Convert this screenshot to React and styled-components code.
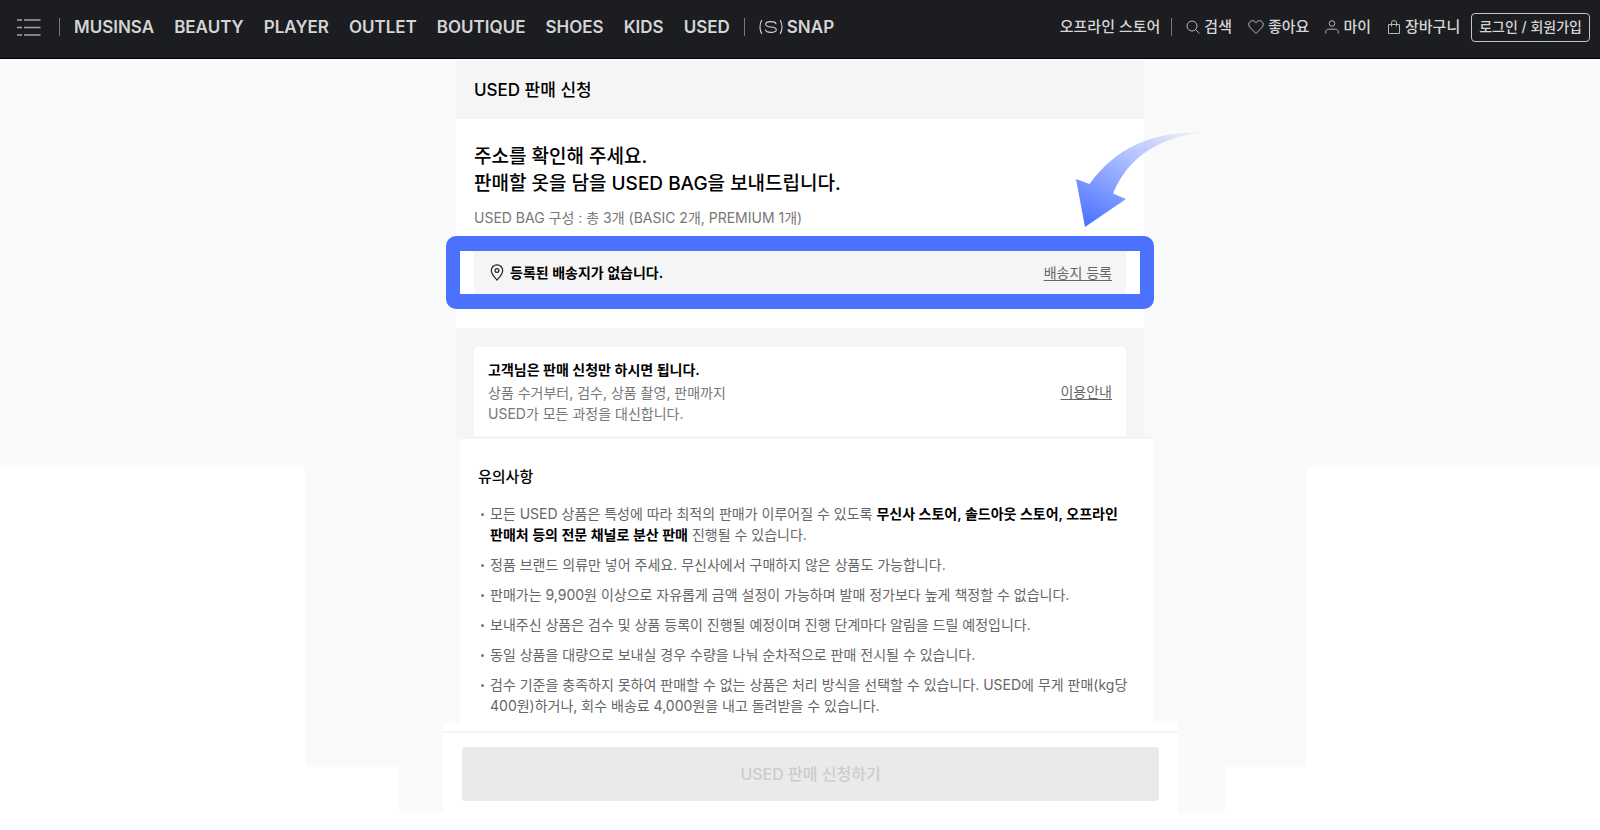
import React from "react";
import styled, { createGlobalStyle } from "styled-components";

const GlobalStyle = createGlobalStyle`
  *, *::before, *::after { box-sizing: border-box; }
  body {
    margin: 0;
    background: #fff;
    color: #000;
    font-family: Inter, "Noto Sans CJK KR", sans-serif;
    font-size: 14px;
    line-height: 21px;
    word-break: keep-all;
  }
  h1, h2, p, ul { margin: 0; padding: 0; }
  a { color: inherit; }
`;

const Header = styled.header`
  display: flex;
  align-items: center;
  justify-content: space-between;
  gap: 24px;
  height: 59px;
  padding: 0 10px 4px 17px;
  background: #1c1d20;
  border-bottom: 1px solid #000;
  color: #d4d4d6;
  font-weight: 500;
  white-space: nowrap;
`;

const NavGroup = styled.nav`
  display: flex;
  align-items: center;
  gap: ${(p) => p.$gap}px;
`;

const LinkList = styled.div`
  display: flex;
  align-items: center;
  gap: ${(p) => p.$gap}px;
  padding-left: ${(p) => p.$indent || 0}px;
`;

const MenuButton = styled.button`
  display: flex;
  padding: 0 4px 0 0;
  border: 0;
  background: none;
  color: #a4a5a7;
`;

const Divider = styled.span`
  width: 1px;
  height: 18px;
  background: #77787b;
`;

const NavLink = styled.a`
  display: flex;
  align-items: center;
  gap: 4px;
  font-size: ${(p) => (p.$small ? 15 : 17)}px;
  font-weight: ${(p) => (p.$small ? 500 : 600)};
  line-height: 24px;
  text-decoration: none;

  svg { color: #b4b5b7; }
`;

const LoginButton = styled.button`
  height: 29px;
  padding: 0 7px;
  border: 1px solid #c4c5c7;
  border-radius: 4px;
  background: none;
  color: inherit;
  font: inherit;
  line-height: 24px;
`;

const Main = styled.main`
  display: flex;
  flex-direction: column;
  align-items: center;
  min-height: 754px;
  border-top: 2px solid #fcfcfc;
  background:
    linear-gradient(#fafafa, #fafafa) center top / 100% 406px no-repeat,
    linear-gradient(#fafafa, #fafafa) calc(50% + 6px) top / 1002px 706px no-repeat,
    linear-gradient(#fafafa, #fafafa) calc(50% + 12px) top / 826px 752px no-repeat;
`;

const Column = styled.div`
  width: 100%;
  max-width: 688px;
`;

const TitleBar = styled.div`
  padding: 17px 18px;
  background: #f5f5f5;
  font-size: 17px;
  font-weight: 500;
  line-height: 24px;

  h1 { font: inherit; }
`;

const Intro = styled.section`
  position: relative;
  padding: 24px 18px 34px;
  background: #fff;
`;

const Headline = styled.h2`
  font-size: 19px;
  font-weight: 500;
  line-height: 27px;
`;

const SubText = styled.p`
  margin-top: 10px;
  color: #777;
`;

const AddressRow = styled.div`
  position: relative;
  display: flex;
  align-items: center;
  gap: 6px;
  height: 43px;
  margin-top: 23px;
  padding: 0 14px 0 16px;
  background: #f5f5f5;
`;

const Highlight = styled.div`
  position: absolute;
  inset: -15px -28px;
  border: solid #4a72ff;
  border-width: 15px 14px;
  border-radius: 10px;
  pointer-events: none;
`;

const Arrow = styled.svg`
  position: absolute;
  top: 13px;
  right: -58px;
`;

const Strong = styled.strong`
  color: #000;
  font-weight: 600;
`;

const TextLink = styled.a`
  margin-left: auto;
  color: #666;
  text-underline-offset: 2px;
`;

const Info = styled.section`
  padding: 19px 18px 0;
  background: #f5f5f5;
`;

const Card = styled.div`
  display: flex;
  align-items: center;
  height: 89px;
  padding: 0 14px;
  border-radius: 4px 4px 0 0;
  background: #fff;

  p {
    margin-top: 2px;
    color: #777;
  }
`;

const Notice = styled.section`
  width: 100%;
  max-width: 706px;
  padding-left: 13px;
`;

const NoticeBody = styled.div`
  padding: 27px 16px 7px 18px;
  border-top: 3px solid #f5f5f5;
  background: #fff;

  h2 {
    font-size: 15px;
    font-weight: 500;
    line-height: 21px;
  }
`;

const NoticeList = styled.ul`
  display: flex;
  flex-direction: column;
  gap: 9px;
  margin-top: 16px;
  color: #666;
  list-style: none;
`;

const NoticeItem = styled.li`
  display: flex;
  gap: 6px;

  &::before {
    content: "";
    flex: none;
    width: 3px;
    height: 3px;
    margin: 10px 0 0 3px;
    border-radius: 50%;
    background: #777;
  }
`;

const ApplyBar = styled.footer`
  width: 100%;
  max-width: 756px;
  padding-left: 21px;
`;

const ApplyInner = styled.div`
  padding-top: 8px;
  background: #fff;
`;

const ApplyActions = styled.div`
  padding: 14px 19px 12px;
  border-top: 2px solid #f5f5f5;
`;

const ApplyButton = styled.button`
  width: 100%;
  height: 54px;
  border: 0;
  border-radius: 4px;
  background: #eaeaea;
  color: #ccc;
  font: inherit;
  font-size: 16px;
  font-weight: 500;
`;

const MenuIcon = () => (
  <svg width="24" height="18" viewBox="0 0 24 18" stroke="currentColor" strokeWidth="1.3">
    <path d="M0 2h5M7 2h16.500M0 9.500h5M7 9.500h16.500M0 17h5M7 17h16.500" />
  </svg>
);

const Icon = ({ width = 14, children }) => (
  <svg width={width} height="16" viewBox={`0 0 ${width} 16`} fill="none" stroke="currentColor" strokeWidth="1">
    {children}
  </svg>
);

const SnapIcon = () => (
  <svg width="24" height="16" viewBox="0 0 24 16" fill="none" stroke="#d4d4d6" strokeWidth="1.1">
    <path d="M2.800 1C.6 5.200.6 10.800 2.800 15M21.200 1c2.200 4.200 2.200 9.800 0 14" />
    <path d="M17 5.200C17 3 15 2.600 11.800 2.600S6.700 3.100 6.700 5.200 8.600 7.800 11.900 8 17.300 8.500 17.300 10.800 15.200 13.400 12 13.400 6.500 12.800 6.500 10.600" />
  </svg>
);

const PinIcon = () => (
  <svg width="14" height="17" viewBox="0 0 14 17" fill="none" stroke="#222" strokeWidth="1.2">
    <path d="M7 16C4.500 13.300 1.300 10 1.300 6.500a5.700 5.700 0 0 1 11.400 0C12.700 10 9.500 13.300 7 16Z" />
    <circle cx="7" cy="6.500" r="1.900" />
  </svg>
);

const CATEGORIES = ["MUSINSA", "BEAUTY", "PLAYER", "OUTLET", "BOUTIQUE", "SHOES", "KIDS", "USED"];

const NOTICES = [
  <>
    모든 USED 상품은 특성에 따라 최적의 판매가 이루어질 수 있도록{" "}
    <Strong>무신사 스토어, 솔드아웃 스토어, 오프라인 판매처 등의 전문 채널로 분산 판매</Strong> 진행될 수 있습니다.
  </>,
  "정품 브랜드 의류만 넣어 주세요. 무신사에서 구매하지 않은 상품도 가능합니다.",
  "판매가는 9,900원 이상으로 자유롭게 금액 설정이 가능하며 발매 정가보다 높게 책정할 수 없습니다.",
  "보내주신 상품은 검수 및 상품 등록이 진행될 예정이며 진행 단계마다 알림을 드릴 예정입니다.",
  "동일 상품을 대량으로 보내실 경우 수량을 나눠 순차적으로 판매 전시될 수 있습니다.",
  "검수 기준을 충족하지 못하여 판매할 수 없는 상품은 처리 방식을 선택할 수 있습니다. USED에 무게 판매(kg당 400원)하거나, 회수 배송료 4,000원을 내고 돌려받을 수 있습니다.",
];

export default function App() {
  return (
    <>
      <GlobalStyle />
      <Header>
        <NavGroup $gap={14}>
          <MenuButton type="button" aria-label="메뉴">
            <MenuIcon />
          </MenuButton>
          <Divider />
          <LinkList $gap={20}>
            {CATEGORIES.map((name) => (
              <NavLink key={name} href="#">{name}</NavLink>
            ))}
          </LinkList>
          <Divider />
          <NavLink href="#"><SnapIcon />SNAP</NavLink>
        </NavGroup>
        <NavGroup $gap={11}>
          <NavLink $small href="#">오프라인 스토어</NavLink>
          <Divider />
          <LinkList $gap={16} $indent={3}>
            <NavLink $small href="#">
              <Icon><circle cx="6" cy="7" r="5" /><path d="m9.600 10.600 3.900 3.900" /></Icon>
              검색
            </NavLink>
            <NavLink $small href="#">
              <Icon width={16}>
                <path d="M8 14.500 2 8.400C.3 6.600.4 4 2 2.600c1.700-1.500 4.200-1.200 5.400.5L8 4l.6-.9c1.200-1.700 3.700-2 5.400-.5 1.600 1.400 1.700 4 0 5.800Z" />
              </Icon>
              좋아요
            </NavLink>
            <NavLink $small href="#">
              <Icon><circle cx="7" cy="4.500" r="2.800" /><path d="M.8 14.500v-1.700c0-1.600 1.100-2.600 2.700-2.600h7c1.600 0 2.700 1 2.700 2.600v1.700" /></Icon>
              마이
            </NavLink>
            <NavLink $small href="#">
              <Icon><path d="M1.500 5.500h11v9h-11zM4.500 7.500V4a2.500 2.500 0 0 1 5 0v3.500" /></Icon>
              장바구니
            </NavLink>
          </LinkList>
          <LoginButton type="button">로그인 / 회원가입</LoginButton>
        </NavGroup>
      </Header>

      <Main>
        <Column>
          <TitleBar><h1>USED 판매 신청</h1></TitleBar>
          <Intro>
            <Headline>
              주소를 확인해 주세요.<br />
              판매할 옷을 담을 USED BAG을 보내드립니다.
            </Headline>
            <SubText>USED BAG 구성 : 총 3개 (BASIC 2개, PREMIUM 1개)</SubText>
            <AddressRow>
              <PinIcon />
              <Strong>등록된 배송지가 없습니다.</Strong>
              <TextLink href="#">배송지 등록</TextLink>
              <Highlight />
            </AddressRow>
            <Arrow width="126" height="96" viewBox="0 0 126 96" aria-hidden="true">
              <defs>
                <linearGradient id="arrowFill" gradientUnits="userSpaceOnUse" x1="14" y1="95" x2="78" y2="-20">
                  <stop offset="0" stopColor="#4a72ff" />
                  <stop offset="1" stopColor="#4a72ff" stopOpacity="0.08" />
                </linearGradient>
              </defs>
              <path d="M126 .5C79-1 41 14 13.500 52L0 47l9 48 41-28-13-5.500C51 28 79 6 126 .5Z" fill="url(#arrowFill)" />
            </Arrow>
          </Intro>
          <Info>
            <Card>
              <div>
                <Strong>고객님은 판매 신청만 하시면 됩니다.</Strong>
                <p>상품 수거부터, 검수, 상품 촬영, 판매까지<br />USED가 모든 과정을 대신합니다.</p>
              </div>
              <TextLink href="#">이용안내</TextLink>
            </Card>
          </Info>
        </Column>

        <Notice>
          <NoticeBody>
            <h2>유의사항</h2>
            <NoticeList>
              {NOTICES.map((text, i) => (
                <NoticeItem key={i}><span>{text}</span></NoticeItem>
              ))}
            </NoticeList>
          </NoticeBody>
        </Notice>

        <ApplyBar>
          <ApplyInner>
            <ApplyActions>
              <ApplyButton type="button" disabled>USED 판매 신청하기</ApplyButton>
            </ApplyActions>
          </ApplyInner>
        </ApplyBar>
      </Main>
    </>
  );
}
